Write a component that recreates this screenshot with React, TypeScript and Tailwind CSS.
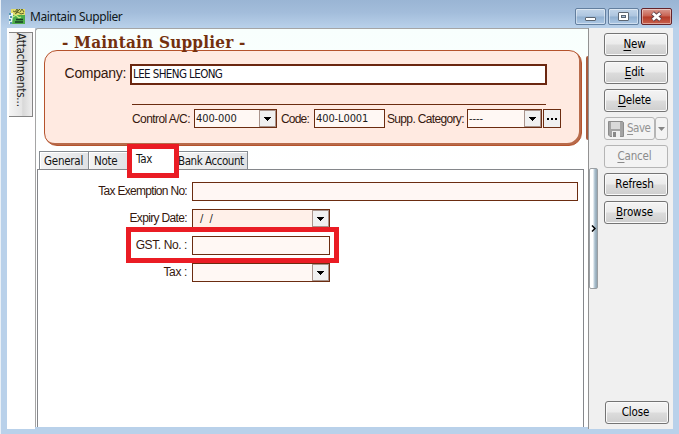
import React from 'react';

const caption = "font-['Noto_Sans','Open_Sans',sans-serif]";
const ui = "font-['DejaVu_Sans_Condensed','DejaVu_Sans',sans-serif] [font-stretch:condensed]";
const label = "font-['Liberation_Sans',sans-serif]";

function Arrow() {
  return (
    <svg width="8" height="4" viewBox="0 0 8 4" shapeRendering="crispEdges" className="shrink-0">
      <path d="M0 0H7V1H6V2H5V3H4V4H3V3H2V2H1V1H0Z" fill="#000" />
    </svg>
  );
}

function DropButton() {
  return (
    <div className="flex h-[17px] w-[17px] shrink-0 items-center justify-center border border-[#a9948c] bg-[#f0f0f0] pt-px">
      <Arrow />
    </div>
  );
}

function Field({ className, text, drop }: { className: string; text?: string; drop?: boolean }) {
  return (
    <div className={`flex h-[19px] shrink-0 items-center justify-between border border-[#6b2c10] ${className}`}>
      <span className={`${ui} whitespace-pre pl-px text-[11px] leading-[17px] tracking-[-0.1px] text-[#1c1c1c]`}>{text}</span>
      {drop && <DropButton />}
    </div>
  );
}

function Button({ first, text, underline = true, disabled }: { first: string; text: string; underline?: boolean; disabled?: boolean }) {
  return (
    <div
      className={`${ui} flex h-[23px] w-16 shrink-0 items-center justify-center rounded-[3px] border pr-[3px] pt-px text-[11.5px] leading-none tracking-[-0.15px] ${
        disabled
          ? 'border-[#b5b5b5] bg-[#f3f3f3] text-[#8b8b8b]'
          : 'border-[#747474] bg-[linear-gradient(#f4f4f4_0%,#ebebeb_48%,#dcdcdc_52%,#cecece_100%)] text-black shadow-[inset_0_0_0_1px_#fafafa]'
      }`}
    >
      <span className={underline ? 'underline underline-offset-2' : ''}>{first}</span>
      {text}
    </div>
  );
}

function AppIcon() {
  return (
    <svg width="17" height="17" viewBox="0 0 17 17">
      <path d="M2 1h14v8H2z" fill="#e2dc6c" />
      <path d="M4 3l2 1 2-3M9 1l-2 4 4-4M11 4l2-3 2 3M6 6l3-2 3 2 3-1" stroke="#5c6429" fill="none" />
      <path d="M0 5h4v11H0z" fill="#e8f4f7" />
      <path d="M0 6h2M1 9h2M0 12h2M1 15h2" stroke="#247ba0" strokeWidth="1.5" />
      <path d="M4 7h12v9H3z" fill="#4dad4a" />
      <path d="M4 9l3-2 3 3 2-1" stroke="#c4ec86" strokeWidth="1.3" fill="none" />
      <path d="M7 11.5h7M6 14h8" stroke="#173f29" strokeWidth="1.3" />
    </svg>
  );
}

function CaptionButton({ kind }: { kind: 'min' | 'max' | 'close' }) {
  return (
    <div
      className={`flex h-[17px] w-[31px] items-center justify-center rounded-[2px] border shadow-[inset_0_0_0_1px_#ffffff70] ${
        kind === 'close'
          ? 'border-[#65232a] bg-[linear-gradient(#d99b91_0%,#c8604f_48%,#b43a27_52%,#c9614d_100%)]'
          : 'border-[#637f9f] bg-[linear-gradient(#c2d5e9_0%,#adc5df_48%,#91b0d0_52%,#adc8e5_100%)]'
      }`}
    >
      <svg width="13" height="11" viewBox="0 0 13 11">
        {kind === 'min' && <rect x="1.5" y="6.5" width="10" height="3" rx="0.5" fill="#fff" stroke="#5c6672" />}
        {kind === 'max' && (
          <>
            <rect x="1.5" y="1.5" width="10" height="8" rx="0.5" fill="#fff" stroke="#5c6672" />
            <rect x="4.5" y="4.5" width="4" height="2" fill="#a9c1dd" stroke="#5c6672" />
          </>
        )}
        {kind === 'close' && (
          <>
            <path d="M2.5 2L10.5 9M10.5 2L2.5 9" stroke="#624149" strokeWidth="4.4" />
            <path d="M2.8 2.2L10.2 8.8M10.2 2.2L2.8 8.8" stroke="#fff" strokeWidth="2.6" />
          </>
        )}
      </svg>
    </div>
  );
}

function TitleBar() {
  return (
    <header className="flex h-7 shrink-0 bg-[linear-gradient(#9ab5d4,#a3bddb_45%,#b9d1ea)] pl-[9px] pr-[7px]">
      <div className="pt-2"><AppIcon /></div>
      <div className={`${caption} ml-[4px] flex-1 pt-[7px] text-[12px] leading-5 tracking-[-0.42px] text-[#101820]`}>Maintain Supplier</div>
      <div className="flex gap-[2px] pt-2">
        <CaptionButton kind="min" />
        <CaptionButton kind="max" />
        <CaptionButton kind="close" />
      </div>
    </header>
  );
}

function SupplierCard() {
  return (
    <section className={`${label} ml-2 h-24 w-[538px] shrink-0 rounded-[13px] border border-[#b5532c] bg-[#ffeae1] text-[12px] text-[#35180e] shadow-[inset_-2px_-2px_0_#b86b4b,inset_-1px_-1px_0_#74361f]`}>
      <div className="flex pt-[13px]">
        <div className="w-[85px] pr-[4px] text-right text-[14px] leading-[18px] tracking-[-0.3px]">Company:</div>
        <div className={`${ui} h-[21px] w-[417px] border-2 border-[#6b2710] bg-white pl-px text-[11.5px] leading-[17px] tracking-[-0.6px] text-[#101020]`}>LEE SHENG LEONG</div>
      </div>
      <div className="ml-[87px] mt-[19px] h-px w-[414px] bg-[#6b2c10]" />
      <div className="mt-1 flex items-center whitespace-nowrap">
        <div className="w-[149px] pr-1 text-right tracking-[-0.55px]">Control A/C:</div>
        <Field className="w-[83px] bg-[#fff8f4]" text="400-000" drop />
        <div className="w-[37px] pl-1 tracking-[-0.8px]">Code:</div>
        <Field className="w-[71px] bg-[#fff8f4]" text="400-L0001" />
        <div className="w-[82px] pl-[2px] tracking-[-0.66px]">Supp. Category:</div>
        <Field className="w-[75px] bg-[#fff8f4]" text="----" drop />
        <div className="ml-px flex h-[19px] w-[18px] items-center justify-center gap-[2px] border border-[#6b2c10] bg-[#f0f0f0]">
          <i className="size-[2px] bg-black" /><i className="size-[2px] bg-black" /><i className="size-[2px] bg-black" />
        </div>
      </div>
    </section>
  );
}

function Tab({ text, className }: { text: string; className: string }) {
  return (
    <div className={`h-[18px] shrink-0 whitespace-nowrap border border-b-0 border-[#858b91] bg-[linear-gradient(105deg,#f5f5f5,#dfe1e4)] leading-[19px] shadow-[inset_1px_1px_0_#fff] ${className}`}>{text}</div>
  );
}

function FormRow({ name, children, className = '', spacing = 'tracking-[-0.6px]' }: { name: string; children: React.ReactNode; className?: string; spacing?: string }) {
  return (
    <div className={`flex items-center ${className}`}>
      <div className={`${label} w-[154px] shrink-0 whitespace-nowrap pb-px pr-[5px] text-right text-[12px] leading-none text-[#35180e] ${spacing}`}>{name}</div>
      {children}
    </div>
  );
}

function TaxPage() {
  return (
    <div className="ml-px w-[547px] flex-1 border border-b-0 border-[#85878b] bg-white pt-3">
      <FormRow name="Tax Exemption No:" spacing="tracking-[-0.7px]"><Field className="w-[386px] bg-[#fff7f4]" /></FormRow>
      <FormRow name="Expiry Date:" className="mt-2" spacing="tracking-[-0.65px]"><Field className="w-[138px] bg-[#fff0e9]" text="  /  /" drop /></FormRow>
      <FormRow name="GST. No. :" className="relative mt-2" spacing="tracking-[-0.4px]">
        <Field className="w-[138px] bg-[#fff8f4]" />
        <div className="absolute -top-[9px] left-[88px] h-[36px] w-[213px] border-[5px] border-[#ea1c24]" />
      </FormRow>
      <FormRow name="Tax :" className="mt-2" spacing="tracking-[-0.35px]"><Field className="w-[138px] bg-[#fff8f4]" drop /></FormRow>
    </div>
  );
}

function SaveButton() {
  return (
    <div className={`${ui} flex h-[23px] w-16 shrink-0 text-[11.5px] text-[#929292]`}>
      <div className="flex w-[51px] items-center rounded-[3px] border border-[#b5b5b5] bg-[#f3f3f3] pl-[3px]">
        <svg width="16" height="16" viewBox="0 0 16 16" className="shrink-0">
          <path d="M.5.5h14l1 1v14H2l-1.5-1.5Z" fill="#a3a3a3" stroke="#8c8c8c" />
          <path d="M3 1h9v7H3z" fill="#d9d9d9" />
          <path d="M4 10h8v6H4z" fill="#eee" />
          <path d="M5 11h3v5H5z" fill="#888" />
        </svg>
        <span className="ml-[3px] pt-px leading-none tracking-[-0.5px]"><span className="underline underline-offset-2">S</span>ave</span>
      </div>
      <div className="flex flex-1 items-center justify-center rounded-[3px] border border-[#b5b5b5] bg-[#f3f3f3]">
        <svg width="7" height="4" viewBox="0 0 7 4"><path d="M0 0h7L3.5 4Z" fill="#858585" /></svg>
      </div>
    </div>
  );
}

export default function App() {
  return (
    <div className="flex h-[434px] w-[679px] flex-col overflow-hidden border-l border-[#e9f0f7] bg-[#b9d1ea]">
      <div className="-ml-px flex flex-col"><TitleBar /></div>
      <div className="flex h-[401px] pl-[6px]">
        <aside className="w-[28px] shrink-0 bg-white pl-[2px] pt-1">
          <div className={`${ui} flex h-[85px] w-6 items-center justify-start border border-l-0 border-[#858585] bg-[linear-gradient(90deg,#f5f5f5,#e5e5e5_55%,#d8d8d8_60%,#eeeeee)] text-[11.5px] leading-[22px] tracking-[-0.15px] text-[#252525] [writing-mode:vertical-rl]`}>
            Attachments...
          </div>
        </aside>
        <main className="relative flex h-[399px] w-[553px] shrink-0 flex-col rounded-tl-[3px] border-l border-t border-[#a5a5a5] bg-[linear-gradient(#f8fffd,#fff_35%)]">
          <h1 className="relative z-10 h-[21px] whitespace-nowrap pl-[26px] font-['DejaVu_Serif_Condensed','DejaVu_Serif',serif] text-[17px] font-bold leading-[26px] tracking-[0.2px] text-[#74300e] [font-stretch:condensed]">- Maintain Supplier -</h1>
          <SupplierCard />
          <div className="absolute right-0 top-[27px] h-[84px] w-[2px] rounded-l bg-[#a75b3d]" />
          <div className={`${ui} relative ml-[3px] mt-[5px] flex h-[18px] text-[11.5px] tracking-[-0.25px] text-[#151515]`}>
            <Tab text="General" className="w-[50px] pl-1" />
            <Tab text="Note" className="-ml-px w-[43px] pl-[5px]" />
            <div className="w-[44px]" />
            <Tab text="Bank Account" className="w-[73px] pl-[2px] tracking-[-0.45px]" />
            <div className="absolute -top-[7px] left-[88px] z-10 h-[34px] w-[52px] border-[5px] border-[#ea1c24] bg-white pl-1 leading-[21px]">Tax</div>
          </div>
          <TaxPage />
        </main>
        <aside className="flex w-[85px] shrink-0 border-l border-[#929292] bg-[#f0f0f0]">
          <div className="mt-[140px] flex h-[121px] w-[9px] shrink-0 items-center justify-center rounded-[2px] border border-[#9b9fa3] bg-[linear-gradient(90deg,#fff_0%,#fff_40%,#a9bfce_70%,#91a5b2)]">
            <svg width="5" height="7" viewBox="0 0 5 7"><path d="M1 .5L4 3.5L1 6.5" fill="none" stroke="#000" strokeWidth="1.5" /></svg>
          </div>
          <nav className="ml-[6px] flex flex-col gap-[5px] pt-[5px]">
            <Button first="N" text="ew" />
            <Button first="E" text="dit" />
            <Button first="D" text="elete" />
            <SaveButton />
            <Button first="C" text="ancel" disabled />
            <Button first="R" text="efresh" underline={false} />
            <Button first="B" text="rowse" />
            <div className="ml-px mt-auto pb-[5px]"><Button first="C" text="lose" underline={false} /></div>
          </nav>
        </aside>
      </div>
    </div>
  );
}
